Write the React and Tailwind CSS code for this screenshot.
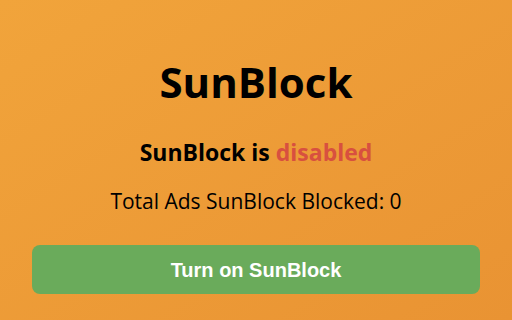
import React from "react";

export default function App() {
  const blocked = 0;
  return (
    <div className="w-[512px] h-[320px] bg-gradient-to-br from-[#f1a43b] to-[#e99333] flex flex-col items-center font-['Open_Sans',sans-serif] text-black">
      <h1 className="mt-[58px] text-[42px] leading-[48px] font-bold">SunBlock</h1>
      <p className="mt-[32px] text-[23px] leading-[28px] font-bold">
        SunBlock is <span className="text-[#d8503f]">disabled</span>
      </p>
      <p className="mt-[22px] text-[21px] leading-[26px]">
        Total Ads SunBlock Blocked: {blocked}
      </p>
      <button className="mt-[31px] w-[448px] h-[49px] rounded-lg bg-[#6aab5b] text-white text-[20px] font-bold font-['Liberation_Sans',sans-serif]">
        Turn on SunBlock
      </button>
    </div>
  );
}
